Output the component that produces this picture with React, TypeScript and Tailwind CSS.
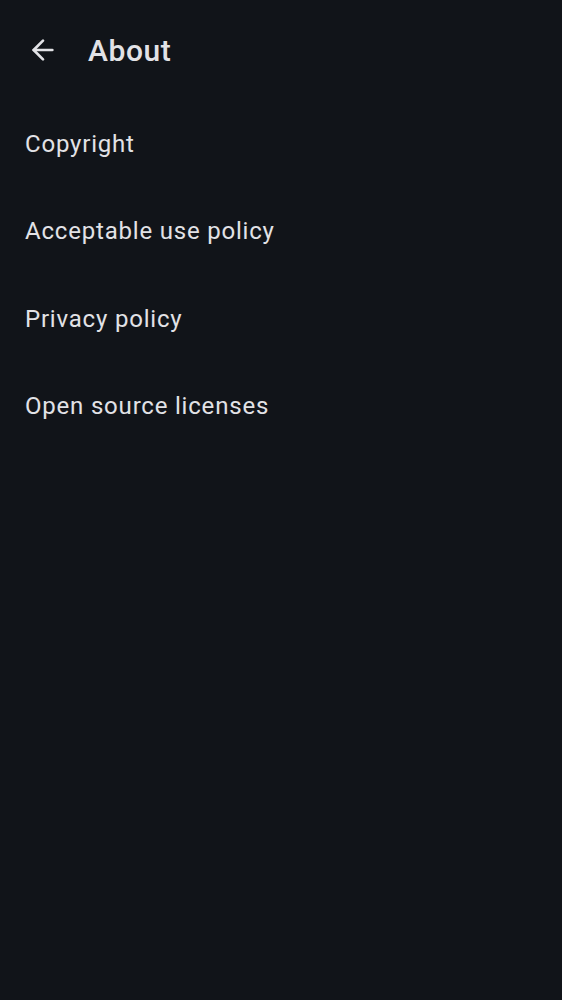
import { ArrowLeft } from "lucide-react";

const items = ["Copyright", "Acceptable use policy", "Privacy policy", "Open source licenses"];

function App() {
  return (
    <div
      className="w-full min-h-screen bg-[#111419] text-[#e2e2e6]"
      style={{ fontFamily: "Roboto, 'Noto Sans', sans-serif" }}
    >
      <div className="flex items-center h-[100px] pl-[27px]">
        <ArrowLeft size={32} strokeWidth={2} className="text-[#e2e2e6]" />
        <h1 className="ml-[29px] text-[30px] font-medium tracking-[0.6px]">About</h1>
      </div>
      <div className="flex flex-col">
        {items.map((item) => (
          <div key={item} className="h-[87.5px] flex items-center pl-[25px] text-[24px] tracking-[0.8px]">
            {item}
          </div>
        ))}
      </div>
    </div>
  );
}

export default App;
